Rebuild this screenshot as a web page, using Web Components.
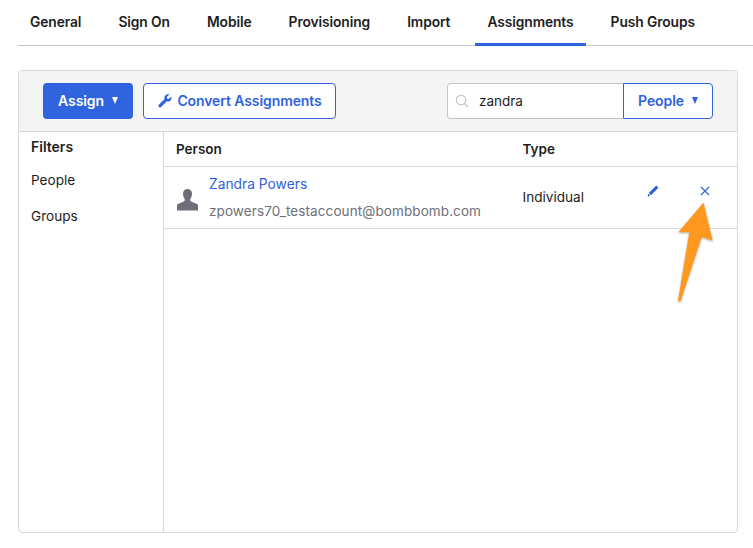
<!DOCTYPE html>
<html>
<head>
<meta charset="utf-8">
<style>
html,body{margin:0;padding:0;background:#fff;}
body{width:753px;height:548px;overflow:hidden;position:relative;font-family:Inter,"Liberation Sans",sans-serif;color:#1d1d21;}
</style>
</head>
<body>
<app-tabs>
  <tab-item>General</tab-item>
  <tab-item>Sign On</tab-item>
  <tab-item>Mobile</tab-item>
  <tab-item>Provisioning</tab-item>
  <tab-item>Import</tab-item>
  <tab-item active>Assignments</tab-item>
  <tab-item>Push Groups</tab-item>
</app-tabs>
<assign-panel>
  <assign-toolbar slot="toolbar"></assign-toolbar>
  <filter-list slot="side"></filter-list>
  <person-table slot="main"></person-table>
</assign-panel>
<arrow-mark></arrow-mark>

<script>
window.customElements.define('app-tabs',
class extends HTMLElement {
  constructor(){super();
    this.attachShadow({mode:'open'});
    this.shadowRoot.innerHTML = `
    <style>
    :host{display:flex;height:45px;margin-left:18px;border-bottom:1px solid #c4c4c7;box-sizing:content-box;}
    </style>
    <slot></slot>`;
  }
});

window.customElements.define('tab-item',
class extends HTMLElement {
  constructor(){super();
    this.attachShadow({mode:'open'});
    this.shadowRoot.innerHTML = `
    <style>
    :host{display:block;padding:0 12px;height:46px;box-sizing:border-box;margin-right:13.1px;
      font-size:13.8px;font-weight:600;line-height:44px;color:#1d1d21;letter-spacing:-.1px;white-space:nowrap;}
    :host([active]){border-bottom:3px solid #3064de;}
    </style>
    <slot></slot>`;
  }
});

window.customElements.define('assign-panel',
class extends HTMLElement {
  constructor(){super();
    this.attachShadow({mode:'open'});
    this.shadowRoot.innerHTML = `
    <style>
    :host{display:block;width:720px;height:463px;margin:24px 0 0 18px;box-sizing:border-box;
      border:1px solid #d7d7dc;border-radius:4px;overflow:hidden;}
    .body{display:flex;height:401px;}
    .side{width:144px;flex:none;border-right:1px solid #d7d7dc;}
    .main{flex:1;min-width:0;}
    </style>
    <slot name="toolbar"></slot>
    <div class="body">
      <div class="side"><slot name="side"></slot></div>
      <div class="main"><slot name="main"></slot></div>
    </div>`;
  }
});

window.customElements.define('assign-toolbar',
class extends HTMLElement {
  constructor(){super();
    this.attachShadow({mode:'open'});
    this.shadowRoot.innerHTML = `
    <style>
    :host{display:flex;align-items:center;height:61px;box-sizing:border-box;padding:0 24px;
      background:#f4f4f4;border-bottom:1px solid #d7d7dc;}
    .btn{display:flex;align-items:center;justify-content:center;height:36px;box-sizing:border-box;padding-bottom:1px;
      font-size:14px;font-weight:600;letter-spacing:-.1px;border-radius:4px;white-space:nowrap;}
    .assign{width:90px;background:#3064de;color:#fff;margin-right:10px;}
    .convert{width:193px;background:#fff;color:#2f62dc;border:1px solid #3064de;}
    .convert svg{margin-right:5px;margin-left:1px;}
    .caret{width:0;height:0;margin-left:8px;border-left:3.5px solid transparent;border-right:3.5px solid transparent;border-top:7px solid currentColor;}
    .search{display:flex;margin-left:auto;height:36px;}
    .field{display:flex;align-items:center;width:176px;box-sizing:border-box;background:#fff;
      border:1px solid #c4c4c7;border-right:none;border-radius:4px 0 0 4px;padding-left:7px;
      font-size:13.5px;color:#1d1d21;}
    .field svg{margin-right:10px;}
    .people{width:90px;background:#fff;color:#2f62dc;border:1px solid #3064de;border-radius:0 4px 4px 0;}
    </style>
    <div class="btn assign">Assign<span class="caret"></span></div>
    <div class="btn convert">
      <svg width="14" height="14" viewBox="0 0 14 14"><path fill="#2f62dc" d="M13.300 2.600 10.900 5 9.200 4.700 8.900 3 11.300.6C9.900.1 8.400.4 7.400 1.400 6.400 2.400 6.100 3.800 6.600 5.100L.9 10.800c-.6.600-.6 1.600 0 2.200.6.600 1.600.6 2.200 0l5.700-5.700c1.300.5 2.700.2 3.700-.8 1-1 1.300-2.500.8-3.900z"/></svg>
      Convert Assignments</div>
    <div class="search">
      <div class="field">
        <svg width="14" height="14" viewBox="0 0 14 14" fill="none" stroke="#c4c4c7" stroke-width="1.200"><circle cx="6" cy="6" r="4.700"/><path d="M9.500 9.500 13 13"/></svg>
        zandra</div>
      <div class="btn people">People<span class="caret"></span></div>
    </div>`;
  }
});

window.customElements.define('filter-list',
class extends HTMLElement {
  constructor(){super();
    this.attachShadow({mode:'open'});
    this.shadowRoot.innerHTML = `
    <style>
    :host{display:block;padding:6px 0 0 12px;font-size:13.6px;color:#1d1d21;}
    .head{font-weight:600;font-size:14px;line-height:17px;margin-bottom:17px;}
    .item{line-height:17px;margin-bottom:19px;}
    </style>
    <div class="head">Filters</div>
    <div class="item">People</div>
    <div class="item">Groups</div>`;
  }
});

window.customElements.define('person-table',
class extends HTMLElement {
  constructor(){super();
    this.attachShadow({mode:'open'});
    this.shadowRoot.innerHTML = `
    <style>
    :host{display:block;font-size:13.6px;color:#1d1d21;}
    .head,.row{display:grid;grid-template-columns:346.500px 1fr;padding-left:12px;box-sizing:border-box;border-bottom:1px solid #d7d7dc;}
    .head{height:35px;align-items:center;font-weight:600;font-size:13.5px;}
    .row{height:62px;align-items:center;position:relative;}
    .person{display:flex;align-items:center;}
    .person svg{flex:none;margin-left:1px;margin-right:11px;margin-top:5px;}
    .name{color:#2f62dc;font-size:13.8px;line-height:17px;margin-bottom:10px;}
    .mail{color:#6e6e78;font-size:13.5px;line-height:17px;letter-spacing:.1px;white-space:nowrap;}
    .acts{display:flex;align-items:center;}
    .kind{width:124px;margin-top:-1px;}
    .acts svg{margin-top:-14px;}
    .edit{margin-right:41px;}
    </style>
    <div class="head"><div>Person</div><div>Type</div></div>
    <div class="row">
      <div class="person">
        <svg width="21" height="22" viewBox="0 0 21 22"><path fill="#6e6e78" d="M10.500 0c2.600 0 4.500 2 4.500 4.800 0 1.900-.7 3.700-1.500 4.900-.5.800-.4 1.900.3 2.500.7.500 2 1 3.300 1.500 1.700.600 3.500 1 3.900 2.500V21.500H0v-5.300c.4-1.500 2.200-1.900 3.900-2.500 1.300-.5 2.600-1 3.300-1.500.7-.6.8-1.700.3-2.500C6.700 8.500 6 6.700 6 4.800 6 2 7.900 0 10.500 0z"/></svg>
        <div>
          <div class="name">Zandra Powers</div>
          <div class="mail">zpowers70_testaccount@bombbomb.com</div>
        </div>
      </div>
      <div class="acts">
        <div class="kind">Individual</div>
        <svg class="edit" width="12" height="12" viewBox="0 0 12 12"><path fill="#2f62dc" d="M9.200.6 11.400 2.800 4 10.200 1.800 8zM1.300 8.700 3.300 10.700 1.200 11.500.6 11z"/></svg>
        <svg width="10" height="10" viewBox="0 0 10 10" fill="none" stroke="#2f62dc" stroke-width="1.100"><path d="M1 1 9 9M9 1 1 9"/></svg>
      </div>
    </div>`;
  }
});

window.customElements.define('arrow-mark',
class extends HTMLElement {
  constructor(){super();
    this.attachShadow({mode:'open'});
    this.shadowRoot.innerHTML = `
    <style>
    :host{display:block;position:absolute;left:670px;top:195px;width:55px;height:115px;}
    svg{display:block;filter:drop-shadow(0 1px 1px rgba(0,0,0,.3));}
    </style>
    <svg width="55" height="115" viewBox="670 195 55 115"><path fill="#fe981f" d="M703.500 202.500 712.700 240.700 701.700 237 680.500 301.500 678 301 689.300 232.300 678.300 232.300z"/></svg>`;
  }
});
</script>
</body>
</html>
